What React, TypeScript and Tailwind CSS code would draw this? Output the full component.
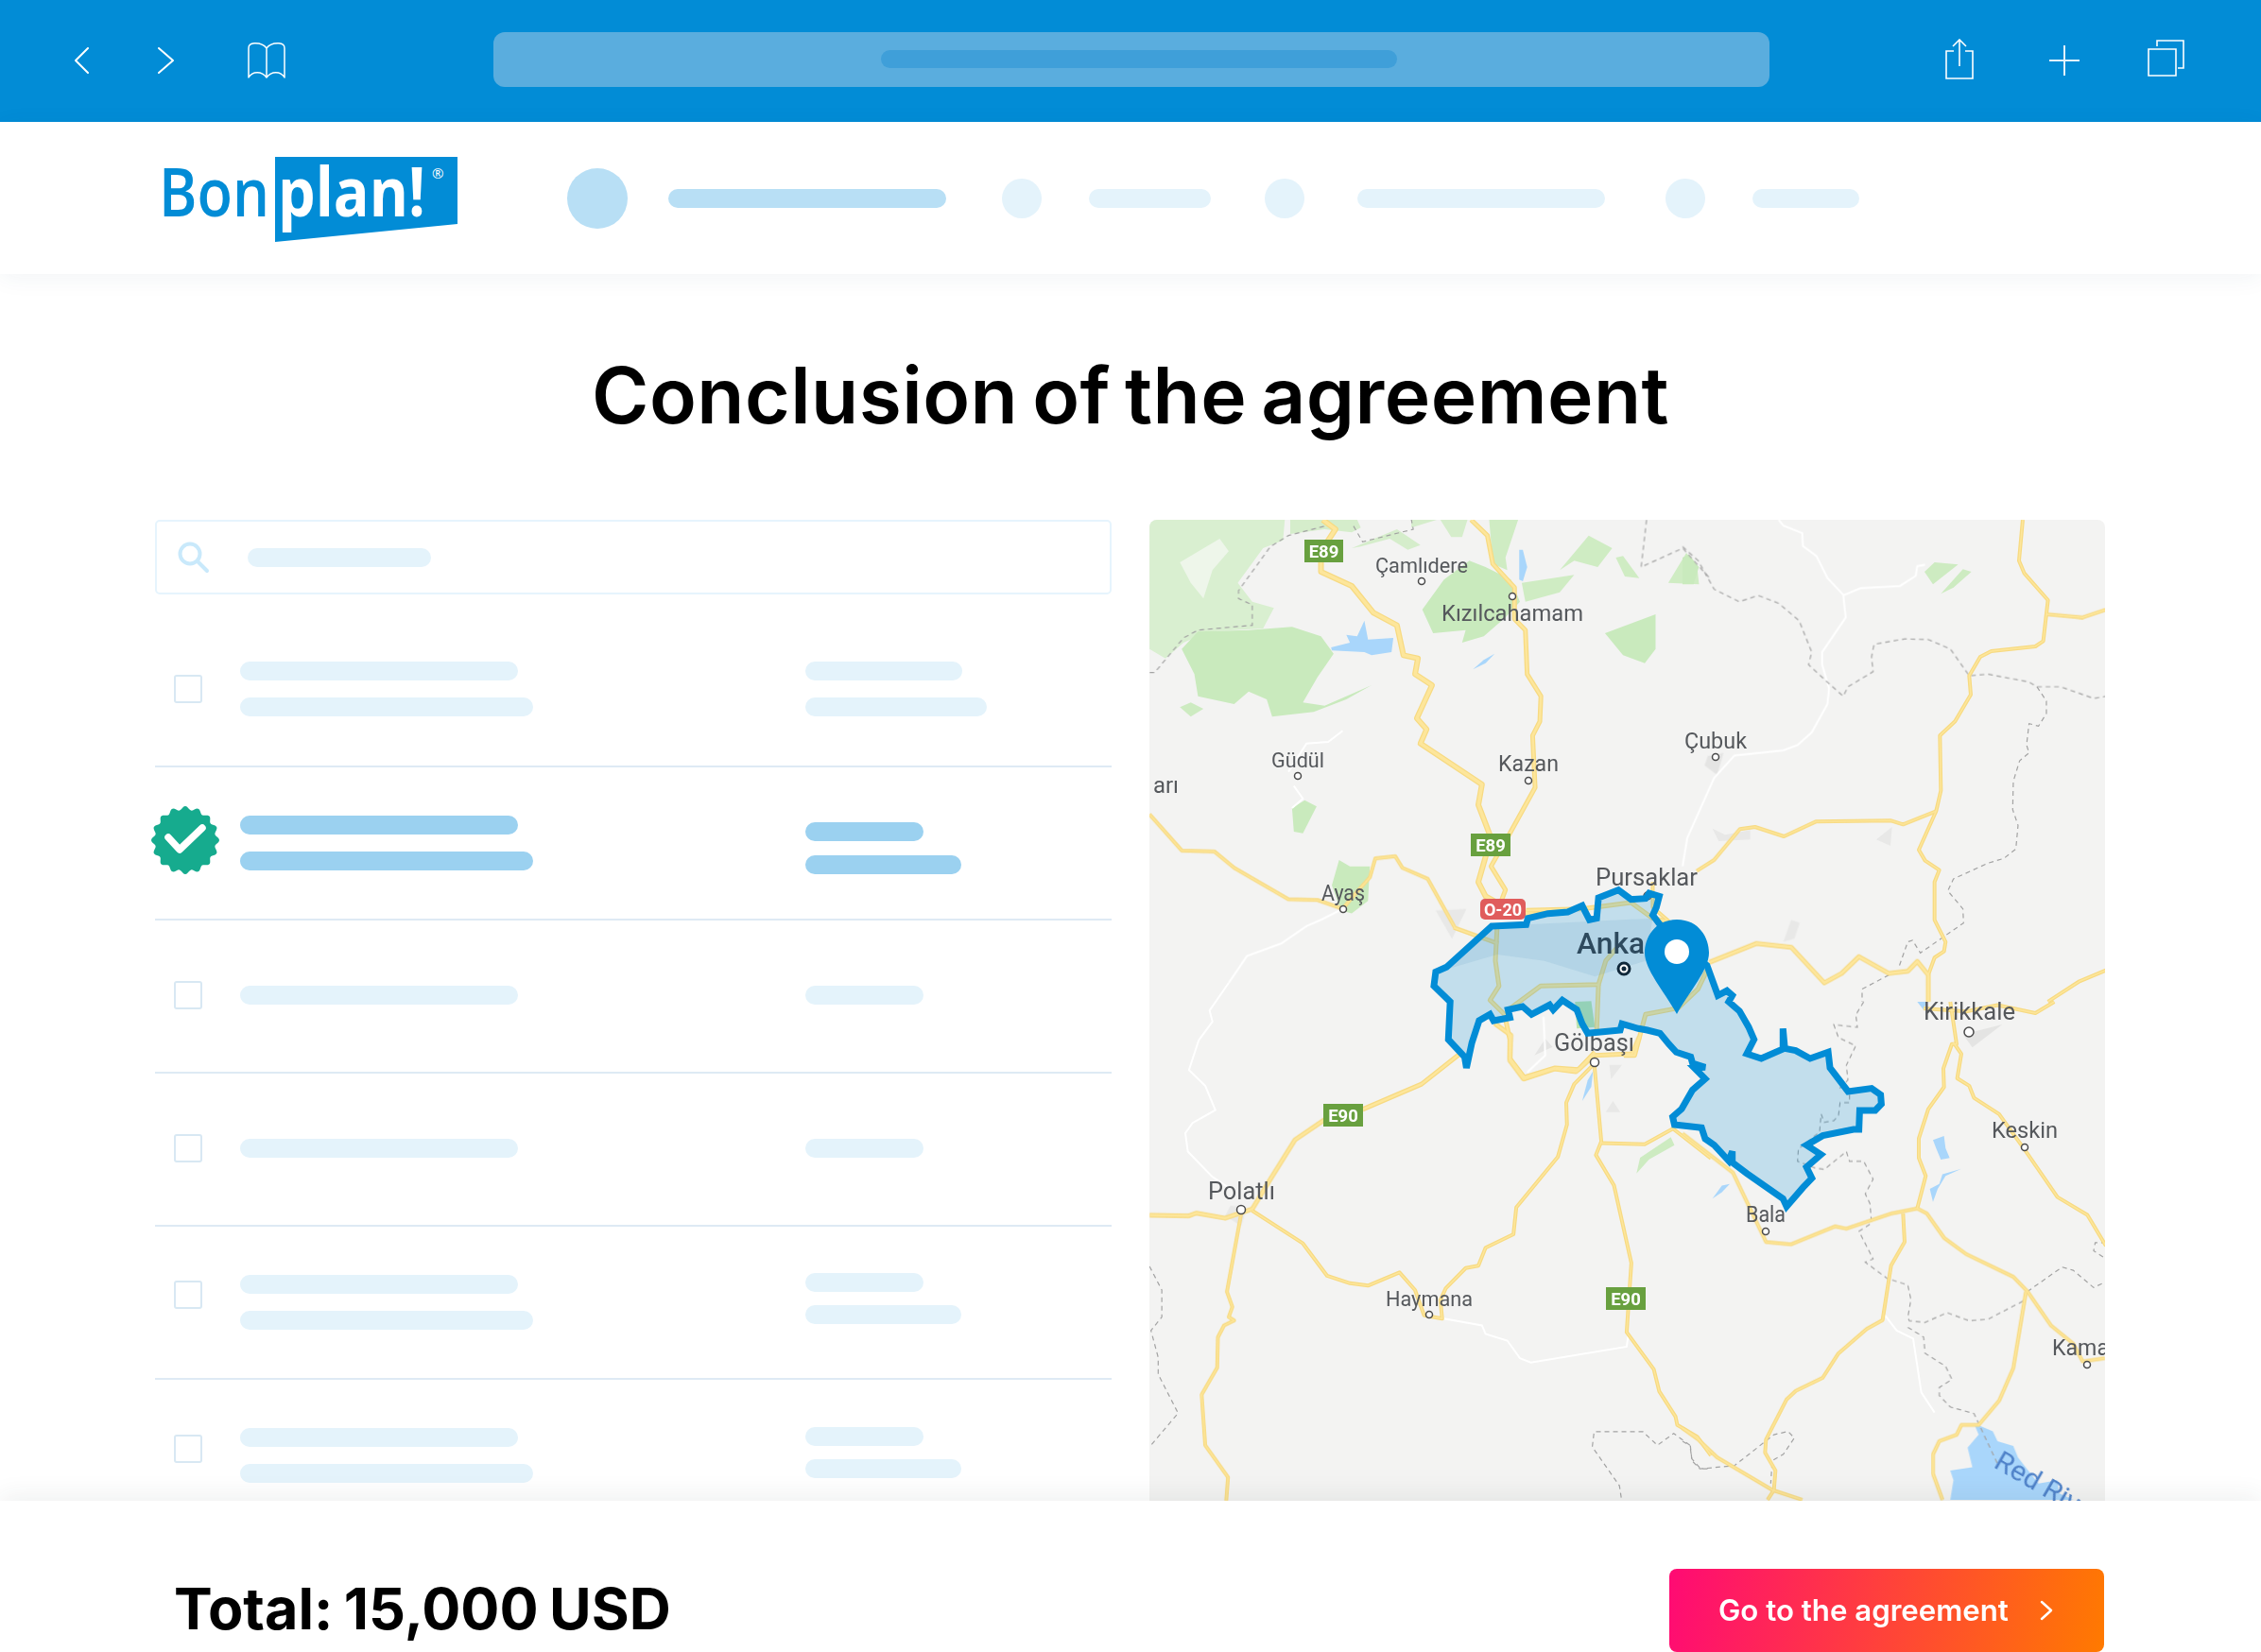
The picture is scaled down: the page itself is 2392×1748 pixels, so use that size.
import React from 'react';

// tracing frames: each one maps a crop of the map onto page pixels
const A = 'translate(1210 540) scale(0.3827 0.3333)';
const B = 'translate(1450 900) scale(0.3827 0.3333)';
const C = 'translate(1780 540) scale(0.3333 0.3333)';
const D = 'translate(1780 1060) scale(0.3333 0.3444)';
const E = 'translate(1210 1040) scale(0.3827 0.3571)';

const forest: [string, string, string][] = [
  [A, '#d9efd0', 'M16,30 L390,30 L385,95 L330,120 L260,230 L300,290 L360,310 L330,375 L180,385 L110,420 L60,470 L16,440 Z'],
  [A, '#eef6ea', 'M100,165 L210,90 L235,130 L190,190 L165,280 L130,230 Z'],
  [A, '#c9eabd', 'M105,440 L150,385 L290,380 L410,370 L490,400 L525,455 L480,530 L440,610 L500,620 L630,555 L560,600 L470,640 L355,655 L340,600 L290,575 L250,615 L150,590 L140,520 Z'],
  [A, '#cdebc1', 'M100,625 L130,610 L165,630 L130,655 Z'],
  [A, '#d5edcb', 'M405,30 L590,30 L600,55 L575,70 L500,60 L405,75 Z'],
  [A, '#d5edcb', 'M575,120 L700,60 L765,110 L730,125 L680,90 L600,115 Z'],
  [A, '#d5edcb', 'M740,55 L810,30 L740,30 Z'],
  [A, '#d5edcb', 'M820,30 L895,30 L880,85 L850,85 Z'],
  [A, '#cfecc3', 'M955,30 L1035,30 L1000,150 L1005,190 L965,170 Z'],
  [A, '#c9eabd', 'M770,315 L830,220 L900,160 L945,180 L1015,220 L1040,290 L1000,340 L940,400 L880,420 L890,380 L800,390 Z'],
  [A, '#cfecc3', 'M1045,230 L1190,205 L1150,260 L1055,290 Z'],
  [A, '#cfecc3', 'M1150,190 L1230,80 L1295,120 L1255,180 L1190,160 Z'],
  [A, '#cfecc3', 'M1305,150 L1325,145 L1370,215 L1330,210 Z'],
  [A, '#cfecc3', 'M1450,230 L1500,135 L1530,180 L1535,235 Z'],
  [A, '#c9eabd', 'M1275,390 L1415,330 L1415,440 L1385,485 L1325,460 Z'],
  [A, '#c9eabd', 'M410,945 L445,920 L478,940 L440,1025 L415,1020 Z'],
  [A, '#c9eabd', 'M520,1190 L540,1110 L570,1130 L625,1130 L620,1240 L575,1280 L545,1270 Z'],
  [C, '#c9eabd', 'M0,150 L20,140 L52,180 L35,235 L0,235 Z'],
  [C, '#cdebc1', 'M768,195 L800,165 L875,172 L795,235 Z'],
  [C, '#cdebc1', 'M820,265 L890,187 L917,195 L860,245 Z'],
  [B, '#cdebc1', 'M735,1025 L745,975 L830,910 L840,935 L770,980 Z'],
  [B, '#b9e3b0', 'M565,480 L610,478 L620,560 L570,565 Z'],
  // built up areas
  [C, '#e8e8e7', 'M95,1010 L135,1030 L215,1015 L215,1045 L115,1050 Z'],
  [C, '#e8e8e7', 'M615,1045 L665,1005 L660,1065 Z'],
  [C, '#e8e8e7', 'M320,1370 L345,1300 L372,1310 L355,1360 Z'],
  [C, '#e4e4e3', 'M70,810 L80,780 L130,770 L110,840 Z'],
  [D, '#e4e4e3', 'M920,140 L890,100 L1015,70 Z'],
  [E, '#e4e4e3', 'M1080,215 L1110,165 L1130,190 Z'],
  [E, '#e8e8e7', 'M225,690 L240,660 L285,665 L270,720 Z'],
  [B, '#e8e8e7', 'M180,190 L265,185 L225,280 Z'],
  [B, '#e8e8e7', 'M660,680 L695,680 L665,725 Z'],
  [B, '#e8e8e7', 'M650,830 L670,795 L690,830 Z'],
  // water
  [A, '#a9d6fb', 'M518,435 L570,420 L560,395 L590,400 L610,350 L620,410 L690,405 L685,450 L630,460 L610,450 L520,445 Z'],
  [A, '#a9d6fb', 'M1038,125 L1048,125 L1060,180 L1048,225 L1038,220 Z'],
  [A, '#a9d6fb', 'M910,505 L940,475 L970,455 L945,485 Z'],
  [D, '#a9d6fb', 'M795,425 L830,412 L835,450 L848,480 L820,485 L805,450 Z'],
  [D, '#a9d6fb', 'M795,615 L785,575 L815,560 L825,530 L885,513 L835,535 L810,575 Z'],
  [D, '#a9d6fb', 'M95,605 L125,565 L150,560 L125,585 Z'],
  [D, '#a9d6fb', 'M925,1295 L985,1320 L1000,1350 L1050,1365 L1065,1400 L1130,1480 L1190,1470 L1195,1510 L1240,1530 L850,1530 L860,1470 L850,1440 L920,1430 L905,1370 L940,1330 Z'],
  [D, '#a9d6fb', 'M745,0 L775,0 L765,25 Z'],
  [B, '#a9d6fb', 'M585,795 L600,730 L615,700 L610,750 Z'],
];

const white: [string, string][] = [
  [C, 'M305,30 L320,48 L380,72 L382,113 L425,145 L460,215 L510,268 L518,340 L443,450 L443,490 L465,565 L460,615 L410,705 L365,745 L320,762 L165,778 L100,850 L15,1040 L0,1130'],
  [C, 'M510,270 L565,247 L690,240 L740,208 L745,177 L770,173'],
  [E, 'M235,0 L182,82 L190,115 L152,170 L125,258 L170,305 L198,377 L135,415 L115,445 L122,500 L190,575 L240,610'],
  [A, 'M235,1500 L285,1415 L380,1375 L450,1320 L490,1300 L550,1265'],
  [A, 'M415,875 L440,915 L410,945'],
  [A, 'M550,700 L510,735 L450,740 L400,830'],
  [E, 'M830,995 L935,1015 L945,1040 L1005,1060 L1040,1112 L1070,1125 L1335,1078 L1340,1040'],
  [E, 'M1060,265 L1110,215 L1105,100'],
  [D, 'M640,960 L680,1010 L732,1035 L758,1200 L800,1262'],
];

const borders: [string, string][] = [
  [A, 'M16,515 L30,515 L110,405 L150,380 L300,365 L300,300 L262,280 L262,255 L350,115 L400,80 L500,50'],
  [A, 'M580,50 L605,100 L745,60 L740,30'],
  [A, 'M1390,30 L1375,180 L1490,120 L1568,220'],
  [C, 'M0,115 L50,160 L100,250 L180,290 L240,270 L305,295 L370,350 L410,450 L400,490 L465,550 L510,590 L525,560 L605,512 L600,465 L608,425 L705,408 L780,410 L850,440 L910,525 L970,520 L1100,545 L1125,560 L1200,560 L1305,597 L1344,590'],
  [C, 'M1125,560 L1155,605 L1155,645 L1130,685 L1100,677 L1092,745 L1100,770 L1070,795 L1050,860 L1048,950 L1065,1000 L1058,1075 L1020,1105 L970,1120 L860,1170 L842,1208 L890,1265 L892,1310 L755,1405 L730,1365 L715,1370 L685,1455'],
  [C, 'M655,1475 L570,1520 L570,1560'],
  [D, 'M575,0 L550,40 L555,78 L480,70 L495,110 L550,135 L520,195 L525,240 L500,265 L530,280 L530,310 L500,310 L495,350 L480,365 L450,370 L440,345 L435,400 L385,440 L368,450 L365,490 L420,510 L450,515 L520,460 L530,490 L575,490 L605,545 L580,590 L595,620 L600,680 L560,705 L605,790 L580,800 L650,850 L715,870 L725,915 L715,970 L720,980 L770,985 L840,955 L910,980 L970,975 L1090,915'],
  [D, 'M1095,890 L1205,815 L1240,825 L1305,878 L1344,860'],
  [D, 'M715,1000 L765,1030 L770,1080 L835,1120 L855,1160 L815,1185 L815,1210 L850,1245 L925,1265 L1000,1420'],
  [D, 'M1344,740 L1310,740 L1305,765 L1344,790'],
  [D, 'M0,1350 L25,1365 L30,1410 L55,1435 L165,1425 L290,1330 L335,1320 L355,1340 L320,1390 L285,1410 L280,1480'],
  [E, 'M16,840 L50,910 L50,990 L20,1030 L40,1110 L40,1160 L95,1275 L20,1370'],
  [E, 'M1320,1525 L1315,1490 L1240,1375 L1245,1330 L1380,1330 L1420,1370 L1465,1335 L1510,1370 L1515,1410 L1540,1440 L1568,1440'],
];

const roads: [string, number, string][] = [
  [A, 6, 'M495,30 L530,60 L490,130 L490,195 L575,240 L635,325 L700,365 L718,460 L758,470 L750,520 L797,555 L755,660 L782,695 L765,740 L935,870 L925,935 L960,1040 L925,1180 L945,1225 L1000,1260 L1060,1280 L1110,1285'],
  [A, 5, 'M905,30 L950,80 L965,170 L1025,245 L1025,345 L1055,380 L1060,520 L1098,590 L1095,670 L1075,715 L1082,880 L1010,1030 L960,1130 L1000,1205 L990,1235'],
  [A, 4, 'M16,965 L105,1080 L195,1083 L250,1135 L400,1235 L480,1237 L550,1265 L590,1210 L625,1165 L640,1105 L695,1098 L715,1135 L785,1170 L860,1325 L980,1375'],
  [B, 5, 'M350,240 L345,350 L355,430 L330,475 L370,520 L385,600 L385,660 L425,720 L510,690 L575,695 L620,640'],
  [B, 5, 'M375,510 L470,430 L630,425 L650,350 L680,310'],
  [B, 5, 'M630,425 L625,570'],
  [B, 4, 'M230,245 L350,295'],
  [B, 5, 'M430,190 L580,185 L620,180 L720,165 L780,215 L820,225'],
  [B, 5, 'M700,650 L730,650 L760,520 L850,500 L905,440 L930,380'],
  [B, 4, 'M780,100 L780,180 L825,225'],
  [E, 5, 'M16,688 L125,690 L145,682 L225,697 L300,670 L345,590 L418,465 L500,405'],
  [E, 5, 'M605,375 L768,300 L880,205'],
  [E, 4, 'M270,680 L230,915 L245,960 L235,990 L250,1000 L222,1015 L205,1050 L203,1140 L160,1220 L170,1370 L233,1465 L228,1535'],
  [E, 4, 'M300,675 L440,772 L507,868 L570,890 L620,897 L707,858 L750,910 L775,985 L825,995 L820,940 L835,905 L890,845 L925,838 L945,785 L1022,745 L1030,665 L1145,515 L1170,420 L1168,355 L1190,300 L1245,240'],
  [E, 5, 'M970,120 L1015,155 L1012,230 L1050,285 L1135,255 L1195,263 L1245,215 L1350,210 L1370,160'],
  [E, 4, 'M1245,235 L1265,470 L1250,510 L1300,600 L1348,830 L1335,1035 L1410,1145 L1425,1210 L1470,1285 L1475,1310 L1530,1345 L1568,1400'],
  [E, 4, 'M1265,475 L1385,478 L1463,432 L1568,520'],
  [D, 4, 'M0,405 L160,525 L265,738 L345,745 L485,690 L520,697 L665,650 L745,635 L775,650 L830,725 L900,775 L1050,845 L1095,890 L1170,995 L1240,1050 L1270,1105 L1340,1095'],
  [D, 4, 'M745,635 L772,535 L750,480 L750,420 L780,330 L830,262 L828,205 L855,130 L870,130 L850,0'],
  [D, 4, 'M860,125 L885,160 L872,235 L910,258 L925,295 L1005,345 L1090,460 L1190,600 L1285,655 L1344,750'],
  [D, 4, 'M700,650 L705,738 L662,810 L635,978 L585,1005 L495,1080 L445,1155 L360,1195 L330,1222 L265,1345 L262,1385 L295,1440 L290,1500 L270,1530'],
  [D, 4, 'M1090,890 L1050,1125 L1005,1225 L940,1300 L885,1300 L870,1330 L815,1350 L795,1390 L795,1450 L825,1530'],
  [D, 4, 'M0,1310 L50,1345 L110,1400 L285,1500 L380,1530'],
  [D, 4, 'M765,20 L900,30 L1000,10 L1120,35 L1180,0'],
  [C, 4, 'M1080,30 L1068,160 L1085,200 L1160,285 L1145,415 L1120,432 L980,447 L945,465 L910,525 L915,585 L865,670 L817,715 L820,890 L805,955 L750,1078 L770,1112 L815,1142 L800,1180 L800,1300 L835,1370 L830,1400 L800,1420 L780,1475'],
  [C, 4, 'M1155,330 L1270,340 L1344,315'],
  [C, 4, 'M45,1145 L100,1110 L182,1012 L230,1005 L322,1035 L423,988 L662,985 L700,997 L805,955'],
  [C, 4, 'M1160,1560 L1260,1495 L1344,1460'],
  [C, 5, 'M85,1435 L235,1375 L345,1387 L450,1500 L505,1470 L560,1417 L655,1470 L715,1463 L745,1432 L780,1475 L780,1560'],
];

const labels: [string, number, number, number, number][] = [
  ['Çamlıdere', 1455, 606, 98, 22],
  ['Kızılcahamam', 1525, 657, 150, 24],
  ['Güdül', 1345, 812, 56, 22],
  ['arı', 1220, 839, 27, 24],
  ['Kazan', 1585, 816, 64, 24],
  ['Ayaş', 1398, 953, 46, 23],
  ['Pursaklar', 1688, 937, 108, 25],
  ['Gölbaşı', 1644, 1112, 85, 25],
  ['Çubuk', 1782, 792, 66, 24],
  ['Kirikkale', 2035, 1079, 97, 25],
  ['Keskin', 2107, 1204, 70, 24],
  ['Polatlı', 1278, 1269, 71, 25],
  ['Haymana', 1466, 1382, 92, 22],
  ['Bala', 1847, 1293, 42, 23],
  ['Kama', 2171, 1434, 60, 24],
];

const towns: [number, number, number][] = [
  [1504, 615, 3.5], [1600, 631, 3.5], [1373, 821, 3.5], [1617, 826, 3.5], [1421, 962, 3.5],
  [1743, 948, 4], [1687, 1124, 4.5], [1815, 801, 3.5], [2083, 1092, 5], [2142, 1214, 3.5],
  [1313, 1280, 4.5], [1512, 1391, 3.5], [1868, 1303, 3.5], [2208, 1444, 3.5],
];

const shields: [string, number, number, number][] = [
  ['E89', 1380, 571, 41],
  ['E89', 1556, 882, 42],
  ['E90', 1400, 1168, 42],
  ['E90', 1699, 1362, 42],
];

const region = 'M335,240 L430,235 L435,215 L490,200 L545,195 L585,175 L605,220 L625,215 L630,150 L685,125 L720,155 L760,152 L770,135 L798,145 L790,180 L780,205 L800,235 L860,300 L930,365 L960,460 L985,445 L1000,460 L990,480 L1020,510 L1045,560 L1060,600 L1040,645 L1080,660 L1140,630 L1140,565 L1145,628 L1175,635 L1215,660 L1265,640 L1270,690 L1320,765 L1385,755 L1410,775 L1412,805 L1395,825 L1352,825 L1350,885 L1335,885 L1250,905 L1205,935 L1245,965 L1205,1005 L1220,1040 L1195,1070 L1150,1130 L1140,1105 L1040,1025 L1000,990 L1000,955 L990,985 L950,935 L925,915 L915,880 L840,870 L835,845 L860,820 L890,760 L925,725 L895,690 L925,688 L890,675 L885,655 L845,640 L825,615 L800,580 L765,570 L740,565 L695,550 L690,570 L600,580 L585,550 L570,505 L530,475 L505,505 L495,490 L445,520 L420,495 L380,505 L385,530 L340,540 L330,520 L300,540 L280,610 L265,690 L260,655 L215,600 L220,480 L175,430 L180,385 L210,370 Z';

function MapView() {
  return (
    <svg viewBox="1216 550 1011 1038" className="block w-full h-full" style={{ fontFamily: 'Roboto, sans-serif' }}>
      <rect x="1216" y="550" width="1011" height="1038" fill="#f3f3f2" />
      <g className="blur-[0.7px]">
        {forest.map(([t, fill, d], i) => (
          <path key={i} transform={t} d={d} fill={fill} />
        ))}
      </g>
      {white.map(([t, d], i) => (
        <path key={i} transform={t} d={d} fill="none" stroke="#fff" strokeWidth="2" vectorEffect="non-scaling-stroke" />
      ))}
      {borders.map(([t, d], i) => (
        <path key={i} transform={t} d={d} fill="none" stroke="#a3a3a3" strokeWidth="1.2" strokeDasharray="5 4" vectorEffect="non-scaling-stroke" />
      ))}
      {roads.map(([t, w, d], i) => (
        <path key={i} transform={t} d={d} fill="none" stroke="#f7da82" strokeWidth={w} strokeLinejoin="round" vectorEffect="non-scaling-stroke" />
      ))}
      {roads.map(([t, w, d], i) => (
        <path key={i} transform={t} d={d} fill="none" stroke="#fde69b" strokeWidth={w - 2.5} strokeLinejoin="round" vectorEffect="non-scaling-stroke" />
      ))}

      {labels.map(([name, x, y, len, size]) => (
        <text key={name} x={x} y={y} fontSize={size} fill="#55585c" textLength={len} lengthAdjust="spacingAndGlyphs">{name}</text>
      ))}
      <text transform="translate(2108 1552) rotate(30)" fontSize="30" fill="#4f82c9">Red River</text>
      {towns.map(([x, y, r], i) => (
        <circle key={i} cx={x} cy={y} r={r} fill="#fff" stroke="#4a4a4a" strokeWidth="1.5" />
      ))}

      {shields.map(([name, x, y, w], i) => (
        <g key={i}>
          <rect x={x} y={y} width={w} height="24" fill="#68a03f" />
          <text x={x + w / 2} y={y + 19} fontSize="18.5" fontWeight="700" fill="#fff" textAnchor="middle">{name}</text>
        </g>
      ))}
      <rect x="1566" y="951" width="48" height="22" rx="5" fill="#e05c5c" />
      <text x="1590" y="968.5" fontSize="18" fontWeight="700" fill="#fff" textAnchor="middle">O-20</text>

      <path transform={B} d="M200,380 L340,240 L780,215 L760,350 L620,400 L480,350 L350,330 Z" fill="#5b8aa8" fillOpacity="0.12" />
      <path transform={B} d={region} fill="#028cd6" fillOpacity="0.2" stroke="#028cd6" strokeWidth="7" strokeLinejoin="miter" vectorEffect="non-scaling-stroke" />
      <text x="1668" y="1009" fontSize="32" fontWeight="500" fill="#2e4a5e" textLength="72" lengthAdjust="spacingAndGlyphs">Anka</text>
      <circle cx="1718" cy="1025" r="6" fill="#fff" stroke="#10283a" strokeWidth="3" />
      <circle cx="1718" cy="1025" r="2.5" fill="#10283a" />

      <path d="M1774,973 C1750,973 1740,993 1740,1008 C1740,1026 1760,1048 1774,1073 C1788,1048 1808,1026 1808,1008 C1808,993 1798,973 1774,973 Z" fill="#028cd6" />
      <circle cx="1774" cy="1007" r="13" fill="#fff" />
    </svg>
  );
}

function Logo() {
  return (
    <svg width="320" height="120" viewBox="0 -10 320 120" style={{ fontFamily: '"Open Sans", sans-serif' }}>
      <path d="M123 6 H316 V77 L123 96 Z" fill="#028cd6" />
      <text x="0" y="69" fontSize="71" fontWeight="600" fill="#028cd6" textLength="117" lengthAdjust="spacingAndGlyphs">Bon</text>
      <text x="126" y="69" fontSize="71" fontWeight="700" fill="#fff" textLength="156" lengthAdjust="spacingAndGlyphs">plan!</text>
      <text x="289" y="29" fontSize="15" fill="#fff">®</text>
    </svg>
  );
}

function Bar({ className }: { className: string }) {
  return <div className={`h-[20px] rounded-full ${className}`} />;
}

function Dot({ className }: { className: string }) {
  return <div className={`rounded-full shrink-0 ${className}`} />;
}

function Badge() {
  const pts: string[] = [];
  for (let i = 0; i < 180; i++) {
    const a = (i / 180) * Math.PI * 2;
    const r = 34 + 2 * Math.cos(a * 16);
    pts.push(`${(36 + r * Math.cos(a)).toFixed(2)},${(36 + r * Math.sin(a)).toFixed(2)}`);
  }
  return (
    <svg width="72" height="72" viewBox="0 0 72 72" className="shrink-0 -ml-[4px] -mt-[6px]">
      <polygon points={pts.join(' ')} fill="#16ab8e" />
      <path d="M18 33 L30 46 L54 23" fill="none" stroke="#fff" strokeWidth="7.5" strokeLinecap="round" strokeLinejoin="round" />
    </svg>
  );
}

function Checkbox({ className = '' }: { className?: string }) {
  return <div className={`w-[30px] h-[30px] shrink-0 ml-[20px] border-2 border-[#d8e8f3] rounded-[3px] ${className}`} />;
}

const pale = 'bg-[#e4f3fb]';

export default function App() {
  return (
    <div className="relative w-[2392px] h-[1748px] overflow-hidden bg-white flex flex-col" style={{ fontFamily: 'Inter, sans-serif' }}>
      {/* browser chrome */}
      <div className="h-[129px] shrink-0 bg-[#028cd6] flex items-center pl-[79px] pb-[2px]">
        <svg width="15" height="28" viewBox="0 0 15 28" fill="none" stroke="#fff" strokeWidth="2" strokeLinecap="round" strokeLinejoin="round">
          <path d="M14 1 L1 14 L14 27" />
        </svg>
        <svg width="17" height="28" viewBox="0 0 17 28" fill="none" stroke="#fff" strokeWidth="2" strokeLinecap="round" strokeLinejoin="round" className="ml-[73px]">
          <path d="M1 1 L16 14 L1 27" />
        </svg>
        <svg width="40" height="38" viewBox="0 0 40 38" fill="none" stroke="#fff" strokeWidth="1.5" strokeLinejoin="round" className="ml-[78px]">
          <path d="M20 6 C17 2 12 0.5 7 0.8 C3 1 1 3 1 6 V37 C5 30 15 30 20 37 C25 30 35 30 39 37 V6 C39 3 37 1 33 0.8 C28 0.5 23 2 20 6 Z M20 6 V37" />
        </svg>
        <div className="ml-[220px] w-[1350px] h-[58px] -mt-[2px] rounded-[12px] bg-[#5aadde] flex items-center justify-center">
          <div className="ml-[16px] w-[546px] h-[19px] rounded-full bg-[#3f9fd9]" />
        </div>
        <svg width="30" height="43" viewBox="0 0 30 43" fill="none" stroke="#fff" strokeWidth="1.6" className="ml-[186px] -mt-[3px]">
          <path d="M9 13 H1 V42 H29 V13 H21 M15 1 V29 M8 8 L15 1 L22 8" />
        </svg>
        <svg width="32" height="32" viewBox="0 0 32 32" fill="none" stroke="#e3f3fc" strokeWidth="2" className="ml-[80px]">
          <path d="M16 0 V32 M0 16 H32" />
        </svg>
        <svg width="39" height="39" viewBox="0 0 39 39" fill="none" stroke="#fff" strokeWidth="1.6" className="ml-[72px] -mt-[4px]">
          <path d="M1 10 H30 V38 H1 Z M10 7 V1 H38 V30 H32" />
        </svg>
      </div>

      {/* site nav */}
      <div className="relative z-10 h-[161px] shrink-0 bg-white flex items-center pl-[168px] shadow-[0_4px_24px_rgba(30,70,110,0.06)]">
        <Logo />
        <Dot className="ml-[112px] w-[64px] h-[64px] bg-[#b8dff5]" />
        <Bar className="ml-[43px] w-[294px] bg-[#b8dff5]" />
        <Dot className="ml-[59px] w-[42px] h-[42px] bg-[#e4f3fb]" />
        <Bar className="ml-[50px] w-[129px] bg-[#e4f3fb]" />
        <Dot className="ml-[57px] w-[42px] h-[42px] bg-[#e4f3fb]" />
        <Bar className="ml-[56px] w-[262px] bg-[#e4f3fb]" />
        <Dot className="ml-[64px] w-[42px] h-[42px] bg-[#e4f3fb]" />
        <Bar className="ml-[50px] w-[113px] bg-[#e4f3fb]" />
      </div>

      {/* content */}
      <div className="flex-1 min-h-0 overflow-hidden">
        <h1 className="mt-[81px] mb-[83px] text-center text-[82px] leading-[96px] font-semibold text-black tracking-[0.45px] [word-spacing:-6px]">
          Conclusion of the agreement
        </h1>
        <div className="flex gap-[40px] pl-[164px]">
          <div className="w-[1012px] shrink-0">
            <div className="h-[79px] border-2 border-[#e6f4fd] rounded-[5px] flex items-center pl-[22px]">
              <svg width="34" height="34" viewBox="0 0 34 34" fill="none" stroke="#c9e9fb" strokeWidth="4" strokeLinecap="round">
                <circle cx="13" cy="13" r="10.5" />
                <path d="M21 21 L31 31" />
              </svg>
              <Bar className={`ml-[40px] w-[194px] ${pale}`} />
            </div>

            <div className="mt-[19px]">
              <div className="h-[164px] flex items-center border-b-2 border-[#deeaf4]">
                <Checkbox />
                <div className="ml-[40px] w-[598px] flex flex-col gap-[18px]">
                  <Bar className={`w-[294px] ${pale}`} />
                  <Bar className={`w-[310px] ${pale}`} />
                </div>
                <div className="flex flex-col gap-[18px]">
                  <Bar className={`w-[166px] ${pale}`} />
                  <Bar className={`w-[192px] ${pale}`} />
                </div>
              </div>

              <div className="h-[162px] flex items-center border-b-2 border-[#deeaf4]">
                <Badge />
                <div className="ml-[22px] w-[598px] flex flex-col gap-[18px]">
                  <Bar className="w-[294px] bg-[#9bd1f0]" />
                  <Bar className="w-[310px] bg-[#9bd1f0]" />
                </div>
                <div className="mt-[10px] flex flex-col gap-[15px]">
                  <Bar className="w-[125px] bg-[#9bd1f0]" />
                  <Bar className="w-[165px] bg-[#9bd1f0]" />
                </div>
              </div>

              <div className="h-[162px] flex items-center border-b-2 border-[#deeaf4]">
                <Checkbox className="-mt-[2px]" />
                <Bar className={`ml-[40px] w-[294px] mr-[304px] -mt-[3px] ${pale}`} />
                <Bar className={`w-[125px] -mt-[3px] ${pale}`} />
              </div>

              <div className="h-[162px] flex items-center border-b-2 border-[#deeaf4]">
                <Checkbox className="-mt-[2px]" />
                <Bar className={`ml-[40px] w-[294px] mr-[304px] -mt-[3px] ${pale}`} />
                <Bar className={`w-[125px] -mt-[3px] ${pale}`} />
              </div>

              <div className="h-[162px] flex items-center border-b-2 border-[#deeaf4]">
                <Checkbox className="-mt-[16px]" />
                <div className="ml-[40px] w-[598px] flex flex-col gap-[18px]">
                  <Bar className={`w-[294px] ${pale}`} />
                  <Bar className={`w-[310px] ${pale}`} />
                </div>
                <div className="-mt-[8px] flex flex-col gap-[14px]">
                  <Bar className={`w-[125px] ${pale}`} />
                  <Bar className={`w-[165px] ${pale}`} />
                </div>
              </div>

              <div className="h-[162px] flex items-center">
                <Checkbox className="-mt-[16px]" />
                <div className="ml-[40px] -mt-[2px] w-[598px] flex flex-col gap-[18px]">
                  <Bar className={`w-[294px] ${pale}`} />
                  <Bar className={`w-[310px] ${pale}`} />
                </div>
                <div className="-mt-[8px] flex flex-col gap-[14px]">
                  <Bar className={`w-[125px] ${pale}`} />
                  <Bar className={`w-[165px] ${pale}`} />
                </div>
              </div>
            </div>
          </div>

          <div className="w-[1011px] h-[1038px] shrink-0 rounded-t-[8px] overflow-hidden">
            <MapView />
          </div>
        </div>
      </div>

      {/* total + action */}
      <div className="relative z-10 h-[160px] shrink-0 bg-white flex items-end justify-between pl-[184px] pr-[166px] shadow-[0_-6px_24px_rgba(40,50,60,0.07)]">
        <div className="mb-[10px] text-[61px] leading-[72px] font-bold text-black [word-spacing:-3px]">Total: 15,000 USD</div>
        <div className="w-[460px] h-[88px] rounded-[8px] bg-[linear-gradient(100deg,#ff0a74,#ff7a00)] flex items-center pl-[52px] text-white">
          <span className="text-[31.2px] leading-[40px] font-semibold">Go to the agreement</span>
          <svg width="14" height="22" viewBox="0 0 14 22" fill="none" stroke="#fff" strokeWidth="2.5" strokeLinecap="round" strokeLinejoin="round" className="ml-[33px]">
            <path d="M2 2 L12 11 L2 20" />
          </svg>
        </div>
      </div>
    </div>
  );
}
